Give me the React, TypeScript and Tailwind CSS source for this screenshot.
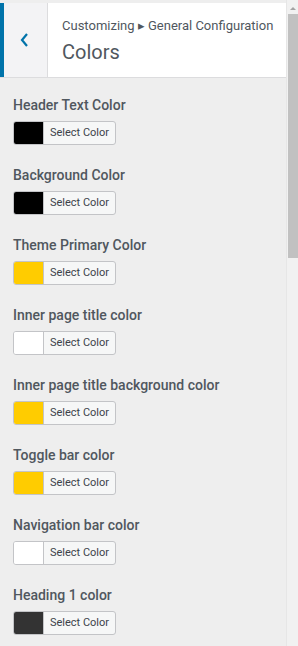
import React from "react";

const items: { label: string; color: string }[] = [
  { label: "Header Text Color", color: "#000000" },
  { label: "Background Color", color: "#000000" },
  { label: "Theme Primary Color", color: "#ffcc00" },
  { label: "Inner page title color", color: "#ffffff" },
  { label: "Inner page title background color", color: "#ffcc00" },
  { label: "Toggle bar color", color: "#ffcc00" },
  { label: "Navigation bar color", color: "#ffffff" },
  { label: "Heading 1 color", color: "#333333" },
];

export default function App() {
  return (
    <div
      className="flex w-[298px] h-[646px] overflow-hidden bg-[#eeeeee]"
      style={{ fontFamily: "Roboto, 'Liberation Sans', sans-serif" }}
    >
      <div className="flex-1 flex flex-col min-w-0">
        <div className="h-[3px] shrink-0 bg-[#eeeeee]" />
        <div className="flex h-[75px] shrink-0 bg-white border-b border-[#dcdcde]">
          <div className="w-[4px] bg-[#0073aa]" />
          <div className="w-[44px] bg-[#f3f3f5] border-r border-[#dcdcde] flex items-center pl-[15px]">
            <svg width="10" height="16" viewBox="0 0 10 16">
              <path d="M8 2 L3 8 L8 14" fill="none" stroke="#0073aa" strokeWidth="2.2" />
            </svg>
          </div>
          <div className="flex-1 pl-[14px] pt-[14px]">
            <div className="text-[13px] leading-[18px] text-[#50575e] whitespace-nowrap">
              Customizing ▸ General Configuration
            </div>
            <div className="text-[20px] leading-[28px] text-[#50575e] mt-[3px]">Colors</div>
          </div>
        </div>
        <div className="pt-[17px] pl-[13px] shrink-0">
          {items.map((it) => (
            <div key={it.label} className="h-[70px]">
              <div className="text-[14px] leading-[20px] font-medium text-[#50575e] whitespace-nowrap">
                {it.label}
              </div>
              <div className="mt-[6px] flex h-[24px] w-[103px] border border-[#c3c4c7] rounded-[3px] overflow-hidden bg-[#f6f7f7]">
                <div className="w-[30px] border-r border-[#c3c4c7]" style={{ backgroundColor: it.color }} />
                <div className="flex-1 flex items-center justify-center text-[11px] text-[#3c434a]">
                  Select Color
                </div>
              </div>
            </div>
          ))}
        </div>
      </div>
      <div className="w-[12px] shrink-0 bg-[#f1f1f1] flex flex-col items-center border-l border-[#e6e6e6]">
        <svg width="8" height="12" viewBox="0 0 8 12" className="mt-[2px] shrink-0">
          <path d="M1 8 L4 5 L7 8 Z" fill="#a3a3a3" />
        </svg>
        <div className="w-[10px] h-[244px] shrink-0 bg-[#c1c1c1]" />
      </div>
    </div>
  );
}
